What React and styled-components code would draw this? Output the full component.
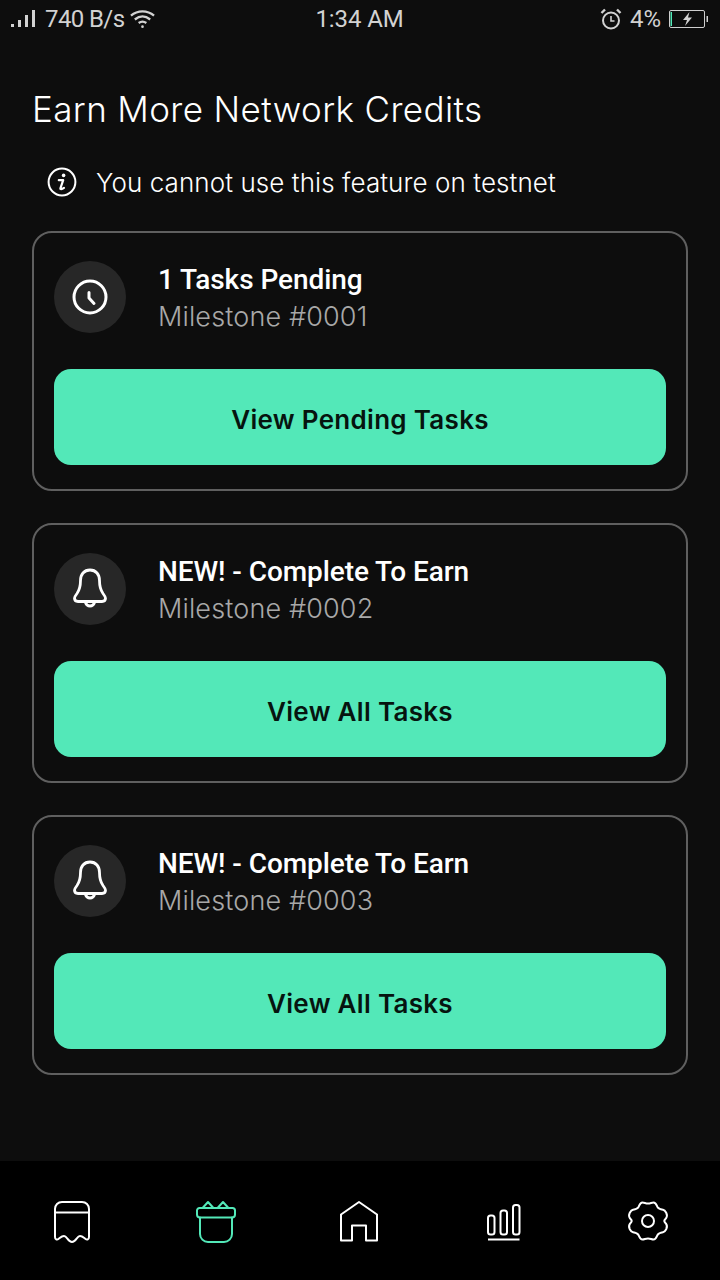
import React from "react";
import styled, { createGlobalStyle } from "styled-components";

const Global = createGlobalStyle`
  html, body { margin: 0; padding: 0; background: #0d0d0d; }
  * { box-sizing: border-box; }
`;
const Screen = styled.div`
  width: 720px; height: 1280px; display: flex; flex-direction: column;
  background: #0d0d0d; color: #fff; font-family: Inter, sans-serif; overflow: hidden;
`;
const StatusBar = styled.div`
  height: 37px; padding: 0 11px; display: grid; grid-template-columns: 1fr auto 1fr; align-items: center;
  font-family: Roboto, sans-serif; font-size: 24px; color: #d2d2d2; flex: none;
`;
const StatusSide = styled.div`
  display: flex; align-items: center; justify-content: ${p => p.$end ? "flex-end" : "flex-start"};
  gap: ${p => p.$end ? 8 : 7}px;
`;
const Speed = styled.span`
  letter-spacing: -0.6px;
`;
const ClockText = styled.span`
  letter-spacing: -0.1px; margin-left: -1px;
`;
const Main = styled.main`
  flex: 1; padding: 49px 32px 0; display: flex; flex-direction: column;
`;
const Title = styled.h1`
  margin: 0; font-size: 35px; line-height: 46px; font-weight: 300; letter-spacing: 0.38px;
`;
const Notice = styled.div`
  margin-top: 27px; padding-left: 15px; height: 46px; display: flex; align-items: center; gap: 19px;
  font-size: 26px; font-weight: 300; letter-spacing: 0.08px; color: #fff;
`;
const Cards = styled.div`
  margin-top: 26px; display: flex; flex-direction: column; gap: 32px;
`;
const Card = styled.section`
  height: 260px; border: 2px solid #5f5f5f; border-radius: 20px; padding: 28px 20px 0;
`;
const CardHead = styled.div`
  height: 72px; display: flex; align-items: center; gap: 32px;
`;
const IconCircle = styled.div`
  width: 72px; height: 72px; border-radius: 50%; background: #272727;
  display: flex; align-items: center; justify-content: center; flex: none;
`;
const CardText = styled.div`
  display: flex; flex-direction: column; flex: none; padding-top: 2px;
`;
const CardTitle = styled.div`
  font-family: Roboto, sans-serif; font-weight: 500; font-size: 28px; line-height: 38px; color: #fff; letter-spacing: -0.07px;
`;
const CardSub = styled.div`
  font-size: 27px; line-height: 36px; font-weight: 300; color: #a8a8a8; letter-spacing: 0.15px;
`;
const ActionButton = styled.button`
  margin-top: 36px; width: 100%; height: 96px; padding: 4px 0 0; border: 0; border-radius: 17px; background: #53e8b8;
  color: #06140f; font-family: Inter, sans-serif; font-size: 26px; font-weight: 600; letter-spacing: 0.3px;
`;
const BottomNav = styled.nav`
  height: 119px; flex: none; background: #000; padding: 0 52px;
  display: flex; justify-content: space-between; align-items: flex-start;
`;
const NavItem = styled.div`
  width: 40px; height: 44px; margin-top: 40px; display: flex; justify-content: center; color: ${p => p.$active ? "#53e8b8" : "#fff"};
  svg { display: block; overflow: visible; }
`;

const Stroke = { fill: "none", stroke: "currentColor", strokeWidth: 2, strokeLinecap: "round", strokeLinejoin: "round" };

const Signal = () => (
  <svg width="25" height="20" viewBox="0 0 25 20" fill="#d2d2d2" style={{ marginRight: 2 }}>
    <rect x="0" y="15" width="3" height="3" /><rect x="7" y="11" width="3" height="7" />
    <rect x="14" y="6" width="3" height="12" /><rect x="21" y="1" width="3" height="17" />
  </svg>
);
const Wifi = () => (
  <svg width="25" height="20" viewBox="0 0 26 20" fill="none" stroke="#d2d2d2" strokeWidth="2.4" style={{ marginLeft: -1 }}>
    <path d="M1 6.500C8 .5 18 .5 25 6.500" /><path d="M5 10.500C10 6.500 16 6.500 21 10.500" /><path d="M9 14.200C11.500 12.400 14.500 12.400 17 14.200" />
    <circle cx="13" cy="18" r="1.400" fill="#d2d2d2" stroke="none" />
  </svg>
);
const Alarm = () => (
  <svg width="22" height="22" viewBox="0 0 22 22" fill="none" stroke="#d2d2d2" strokeWidth="2">
    <circle cx="11" cy="12.500" r="8" /><path d="M11 8v5h3.500" strokeWidth="1.600" />
    <path d="M1.500 5 5 1.500M20.500 5 17 1.500" strokeWidth="2.400" />
  </svg>
);
const Battery = () => (
  <svg width="40" height="18" viewBox="0 0 40 18">
    <rect x="0.5" y="0.5" width="35" height="17" rx="1.500" fill="none" stroke="#cfcfcf" />
    <rect x="1.500" y="2" width="1.500" height="14" fill="#53e8b8" />
    <rect x="37.500" y="6" width="1.500" height="6" fill="#cfcfcf" />
    <path d="M20.500 2 14 10h4l-2 6 7-8.500h-4z" fill="#d2d2d2" />
  </svg>
);
const Info = () => (
  <svg width="30" height="30" viewBox="0 0 30 30" fill="none" stroke="#fff" strokeWidth="2">
    <circle cx="15" cy="15" r="13.400" />
    <circle cx="16.600" cy="8.400" r="1.800" fill="#fff" stroke="none" />
    <path d="M11.800 13.200h4.400L13.400 21.400c-.2 1 1.200 1.200 3.600-.6" strokeWidth="2.200" strokeLinecap="round" strokeLinejoin="round" />
  </svg>
);
const Clock = () => (
  <svg width="36" height="36" viewBox="0 0 36 36" style={{ color: "#fff" }} {...Stroke} strokeWidth="3">
    <circle cx="18" cy="18" r="16" /><path d="M17 13.500v5.500l5 5.500" />
  </svg>
);
const Bell = () => (
  <svg width="34" height="42" viewBox="0 0 34 42" style={{ color: "#fff" }} {...Stroke} strokeWidth="2.800">
    <path d="M17 2c-6 0-9.500 4.500-9.500 10.500 0 5.500-1 9.500-3.500 13-1.500 2-2.500 3.500-2.500 4.800 0 2 1.500 3.200 3.500 3.200h24c2 0 3.500-1.200 3.500-3.200 0-1.300-1-2.800-2.500-4.800-2.500-3.500-3.500-7.500-3.500-13C26.500 6.500 23 2 17 2z" />
    <path d="M12.500 34.500c.8 2.500 2.500 3.500 4.500 3.500s3.700-1 4.500-3.500" />
  </svg>
);
const TicketIcon = () => (
  <svg width="36" height="42" viewBox="0 0 36 42" {...Stroke}>
    <path d="M1 36V8C1 4 4 1 8 1H28C32 1 35 4 35 8V36C35 38.500 33 39 31.500 38C30 37 28.500 35 26 35C23 35 22 41 18 41C14 41 13 35 10 35C7.500 35 6 37 4.500 38C3 39 1 38.500 1 36Z" />
    <path d="M1 11.500h34" />
  </svg>
);
const GiftIcon = () => (
  <svg width="40" height="42" viewBox="0 0 40 42" {...Stroke}>
    <path d="M3.500 7h33A2.500 2.500 0 0 1 39 9.500v4a3 3 0 0 1-3 3H4a3 3 0 0 1-3-3v-4A2.500 2.500 0 0 1 3.500 7z" />
    <path d="M4 16.500V33a8 8 0 0 0 8 8h16a8 8 0 0 0 8-8V16.500" />
    <path d="M7 6.500 12 1 17 6.500M22 6.500 27 1 32 6.500" />
  </svg>
);
const HomeIcon = () => (
  <svg width="38" height="40" viewBox="0 0 38 40" fill="none" stroke="currentColor" strokeWidth="2" style={{ marginLeft: -2 }}>
    <path d="M1 39.500V13.500L19 1l18 12.500V39.500H26V24.500H12V39.500z" strokeLinejoin="round" />
  </svg>
);
const ChartIcon = () => (
  <svg width="34" height="37" viewBox="0 0 34 37" {...Stroke} style={{ marginTop: 3 }}>
    <rect x="1" y="11.500" width="6.500" height="19" rx="2.500" />
    <rect x="13.500" y="6.500" width="6.500" height="24" rx="2.500" />
    <rect x="26" y="1" width="6.500" height="29.500" rx="2.500" />
    <path d="M1 35.500h31.500" strokeLinecap="butt" />
  </svg>
);
const GearIcon = () => (
  <svg width="42" height="40" viewBox="0 0 42 40" {...Stroke} style={{ marginLeft: -2, marginRight: -2 }}>
    <circle cx="21" cy="20" r="6" />
    <path d="M15.500 1.500c2 0 3 1 5.500 1s3.500-1 5.500-1c2.500 0 3 2.500 4 4.500 1.300 2.200 3.500 2.500 5.500 2.800 2 .3 2.500 1.700 3.300 3.200 1 2 1 3.500-.3 5.300-1 1.500-1.700 1.500-1.700 2.700s.7 1.200 1.700 2.700c1.300 1.800 1.300 3.300.3 5.300-.8 1.500-1.300 2.900-3.300 3.200-2 .3-4.200.6-5.500 2.800-1 2-1.500 4.500-4 4.500-2 0-3-1-5.500-1s-3.500 1-5.500 1c-2.500 0-3-2.500-4-4.500-1.300-2.200-3.500-2.500-5.500-2.800-2-.3-2.500-1.700-3.300-3.200-1-2-1-3.500.3-5.300 1-1.500 1.700-1.500 1.700-2.700s-.7-1.200-1.700-2.700c-1.300-1.800-1.300-3.300-.3-5.300.8-1.500 1.300-2.900 3.300-3.200 2-.3 4.200-.6 5.500-2.800 1-2 1.500-4.500 4-4.500z" />
  </svg>
);

const cards = [
  { icon: <Clock />, title: "1 Tasks Pending", sub: "Milestone #0001", action: "View Pending Tasks" },
  { icon: <Bell />, title: "NEW! - Complete To Earn", sub: "Milestone #0002", action: "View All Tasks" },
  { icon: <Bell />, title: "NEW! - Complete To Earn", sub: "Milestone #0003", action: "View All Tasks" },
];

export default function App() {
  return (
    <Screen>
      <Global />
      <StatusBar>
        <StatusSide>
          <Signal />
          <Speed>740 B/s</Speed>
          <Wifi />
        </StatusSide>
        <ClockText>1:34 AM</ClockText>
        <StatusSide $end>
          <Alarm />
          <span>4%</span>
          <Battery />
        </StatusSide>
      </StatusBar>
      <Main>
        <Title>Earn More Network Credits</Title>
        <Notice>
          <Info />
          <span>You cannot use this feature on testnet</span>
        </Notice>
        <Cards>
          {cards.map(c => (
            <Card key={c.sub}>
              <CardHead>
                <IconCircle>{c.icon}</IconCircle>
                <CardText>
                  <CardTitle>{c.title}</CardTitle>
                  <CardSub>{c.sub}</CardSub>
                </CardText>
              </CardHead>
              <ActionButton>{c.action}</ActionButton>
            </Card>
          ))}
        </Cards>
      </Main>
      <BottomNav>
        <NavItem><TicketIcon /></NavItem>
        <NavItem $active><GiftIcon /></NavItem>
        <NavItem><HomeIcon /></NavItem>
        <NavItem><ChartIcon /></NavItem>
        <NavItem><GearIcon /></NavItem>
      </BottomNav>
    </Screen>
  );
}
